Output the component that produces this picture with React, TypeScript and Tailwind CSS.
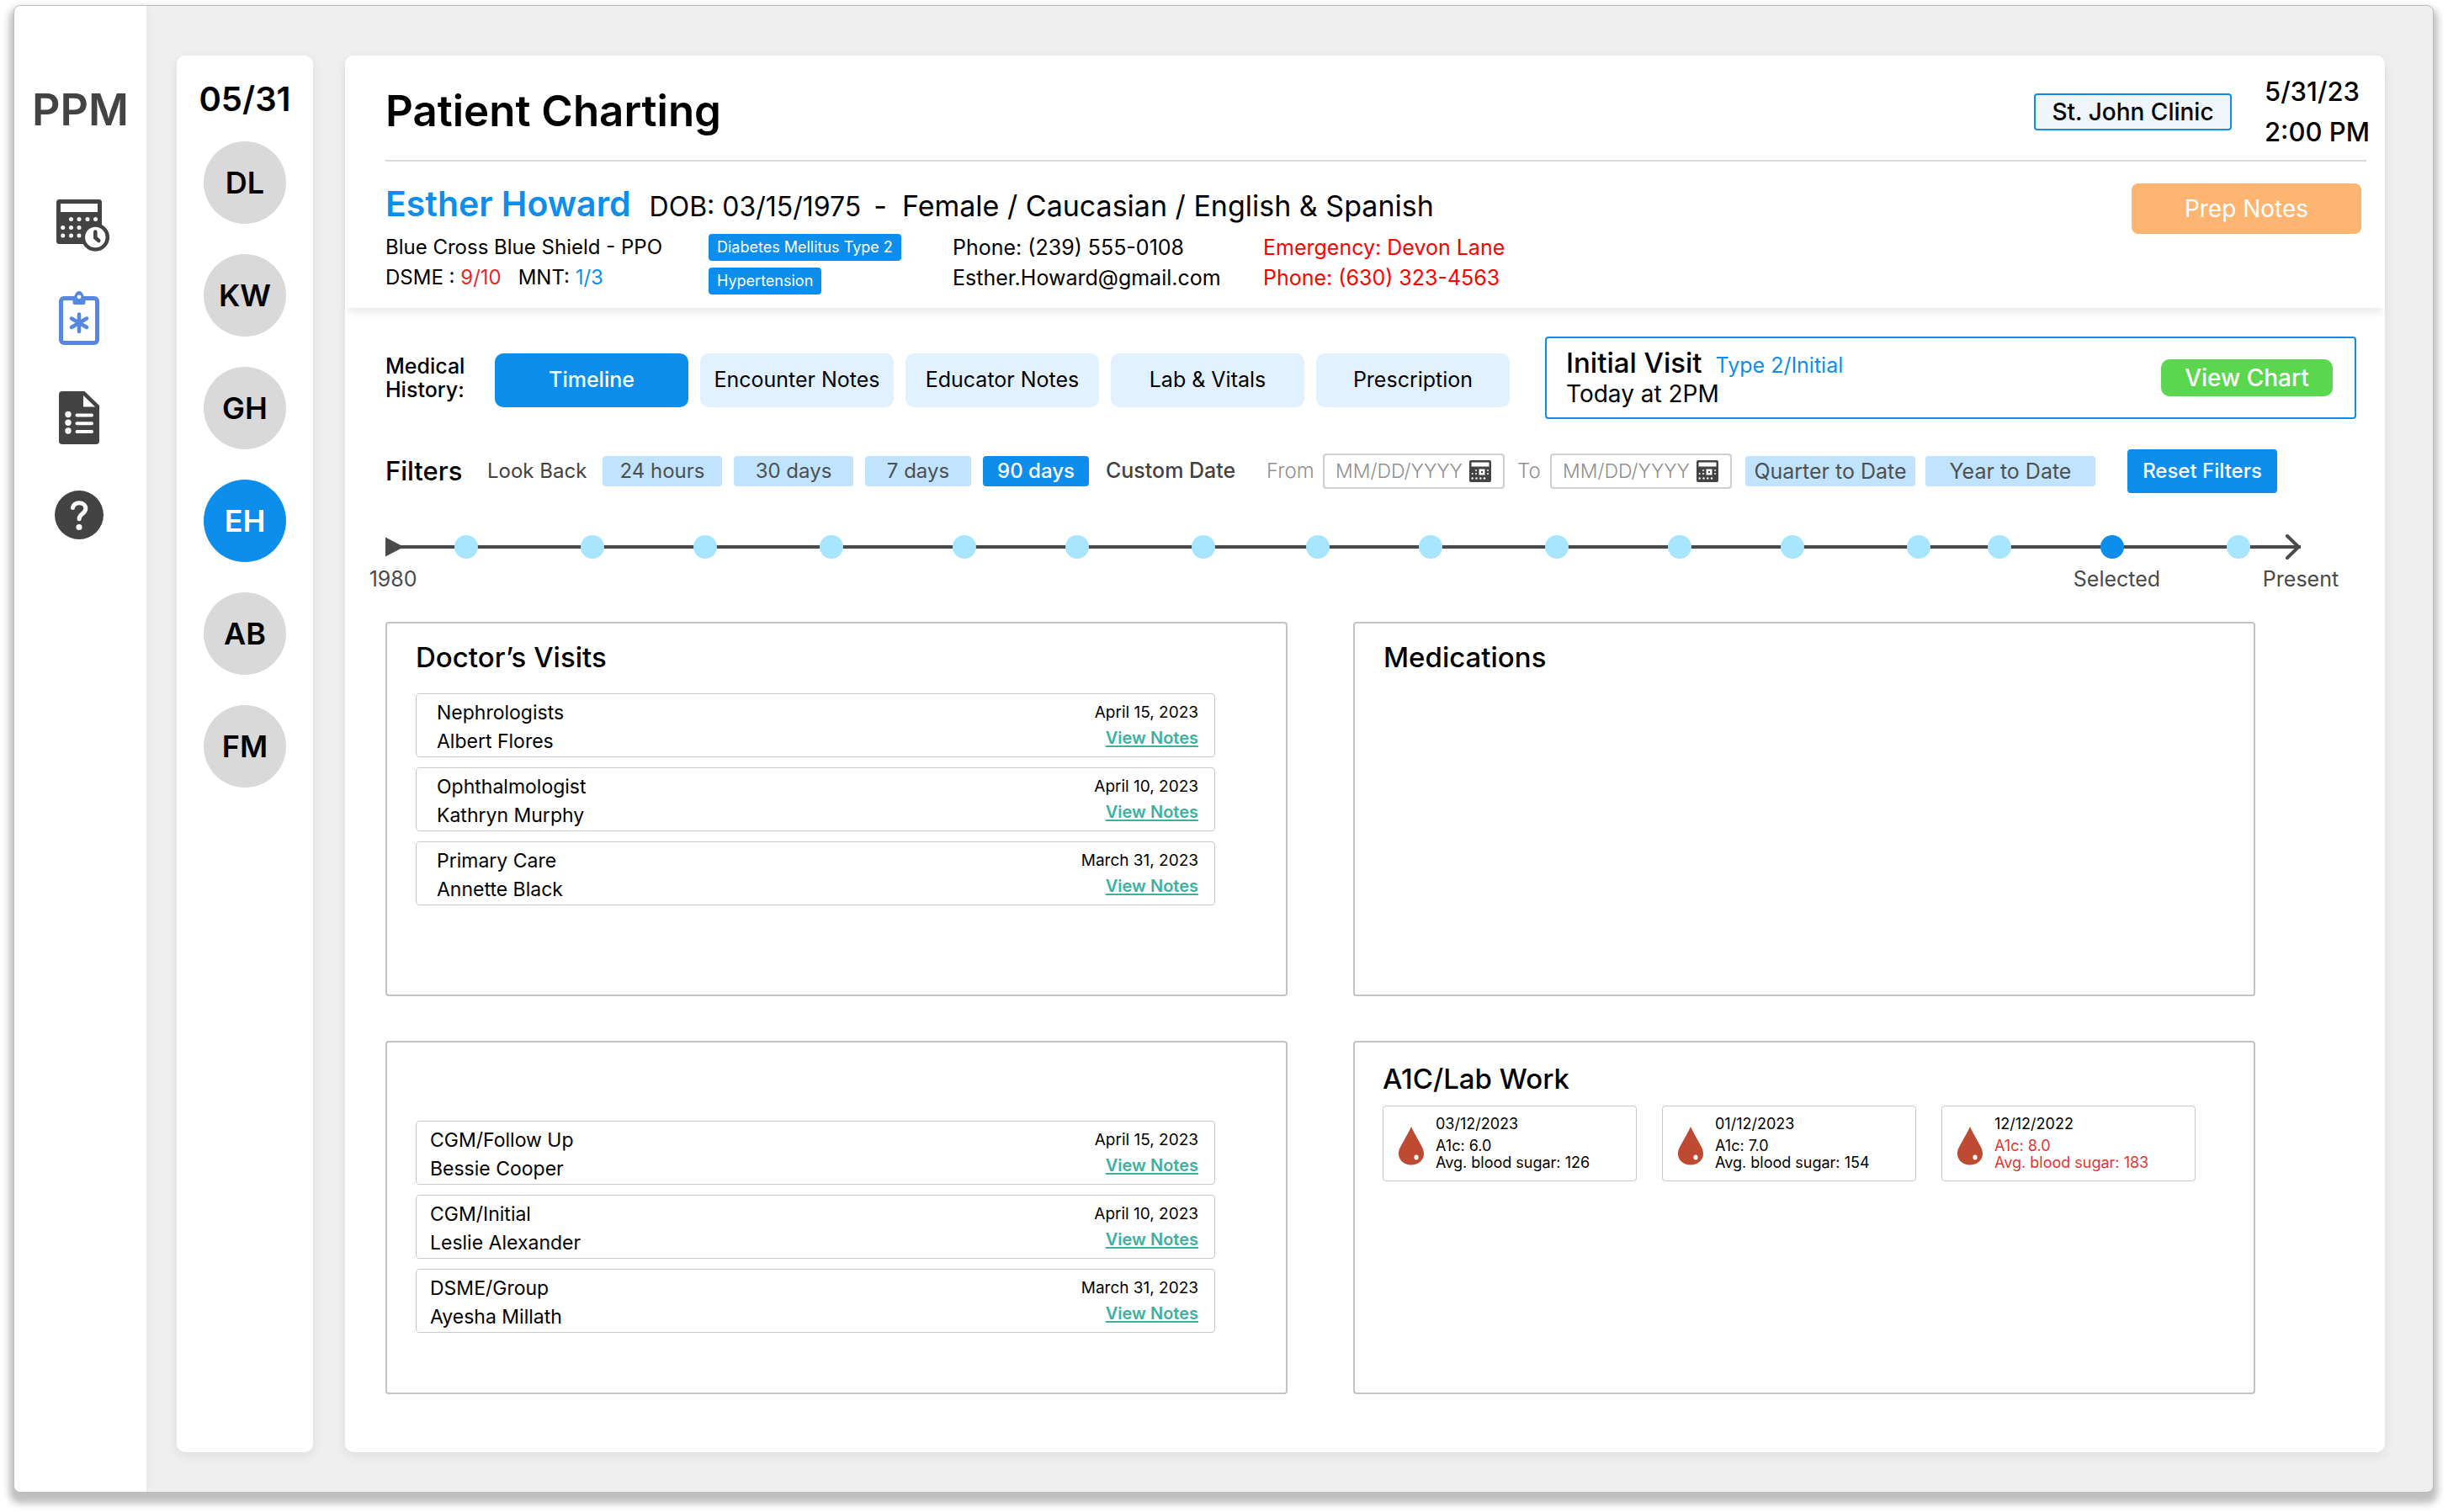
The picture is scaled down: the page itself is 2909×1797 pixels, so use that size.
/**
 * Patient charting screen.
 *
 * Icon rail on the left, the day's patient list next to it,
 * then the chart itself: header, history tabs, filters, timeline and four panels.
 */

import { clsx } from 'clsx'
import type { ReactNode } from 'react'

interface Visit {
  title: string
  provider: string
  date: string
}

const PATIENTS = ['DL', 'KW', 'GH', 'EH', 'AB', 'FM']
const ACTIVE_PATIENT = 'EH'

const TABS = ['Timeline', 'Encounter Notes', 'Educator Notes', 'Lab & Vitals', 'Prescription']

const LOOK_BACK = [
  { label: '24 hours', width: 'w-[142px]' },
  { label: '30 days', width: 'w-[142px]' },
  { label: '7 days', width: 'w-[126px]' },
  { label: '90 days', width: 'w-[126px]', active: true },
]

// Position of every event along the line, in percent
const EVENTS = [
  4.22, 10.81, 16.7, 23.29, 30.23, 36.12, 42.71, 48.68, 54.57, 61.16, 67.57, 73.46, 80.05, 84.27, 90.16, 96.75,
]
const SELECTED_EVENT = 90.16

const TIMELINE_LABELS = [
  { text: '1980', at: 0.4 },
  { text: 'Selected', at: 90.4 },
  { text: 'Present', at: 100 },
]

const DOCTOR_VISITS: Visit[] = [
  { title: 'Nephrologists', provider: 'Albert Flores', date: 'April 15, 2023' },
  { title: 'Ophthalmologist', provider: 'Kathryn Murphy', date: 'April 10, 2023' },
  { title: 'Primary Care', provider: 'Annette Black', date: 'March 31, 2023' },
]

const EDUCATOR_VISITS: Visit[] = [
  { title: 'CGM/Follow Up', provider: 'Bessie Cooper', date: 'April 15, 2023' },
  { title: 'CGM/Initial', provider: 'Leslie Alexander', date: 'April 10, 2023' },
  { title: 'DSME/Group', provider: 'Ayesha Millath', date: 'March 31, 2023' },
]

const LABS = [
  { date: '03/12/2023', a1c: '6.0', sugar: '126' },
  { date: '01/12/2023', a1c: '7.0', sugar: '154' },
  { date: '12/12/2022', a1c: '8.0', sugar: '183', high: true },
]

export default function App() {
  return (
    <div className="flex min-h-screen bg-white pt-[6px] pr-[17px] pb-[25px] pl-4 font-['Inter',sans-serif] text-black">
      <div className="flex flex-1 overflow-clip rounded-lg border border-[#bdbdbd] bg-[#efefef] shadow-[0_8px_8px_5px_rgba(0,0,0,0.25)]">
        <Sidebar />
        <PatientList />
        <main className="mt-[59px] mr-[57px] mb-[47px] ml-[38px] min-w-0 flex-1 rounded-[10px] bg-white shadow-[0_4px_14px_rgba(0,0,0,0.08)]">
          <PatientHeader />
          <div className="pt-[34px] pr-[34px] pb-[69px] pl-12">
            <MedicalHistory />
            <Filters />
            <Timeline />
            <div className="mt-[35px] mr-[120px] grid grid-cols-2 gap-x-[78px] gap-y-[53px]">
              <Panel className="min-h-[445px] pt-5 pr-[84px] pl-[34px]" title="Doctor’s Visits">
                <VisitList visits={DOCTOR_VISITS} className="mt-[23px]" rowClassName="pl-6" />
              </Panel>
              <Panel className="min-h-[445px] pt-5 pl-[34px]" title="Medications" />
              <Panel className="min-h-[420px] pt-[93px] pr-[84px] pl-[34px]">
                <VisitList visits={EDUCATOR_VISITS} rowClassName="pl-4" />
              </Panel>
              <Panel className="min-h-[420px] pt-[23px] pl-[33px]" title="A1C/Lab Work">
                <ul className="mt-3 flex gap-[30px]">
                  {LABS.map((lab) => (
                    <li
                      key={lab.date}
                      className="flex h-[90px] w-[302px] items-center gap-[14px] rounded border border-[#c9c9c9] pl-[18px] text-[18px] leading-5"
                    >
                      <DropIcon />
                      <div>
                        <div className="mb-1.5">{lab.date}</div>
                        <div className={clsx(lab.high && 'text-[#df3535]')}>
                          <div>A1c: {lab.a1c}</div>
                          <div>Avg. blood sugar: {lab.sugar}</div>
                        </div>
                      </div>
                    </li>
                  ))}
                </ul>
              </Panel>
            </div>
          </div>
        </main>
      </div>
    </div>
  )
}

function Sidebar() {
  return (
    <aside className="flex w-[157px] flex-shrink-0 flex-col items-center rounded-l-[7px] bg-white pt-[92px] shadow-[0_0_10px_rgba(0,0,0,0.06)]">
      <div className="text-[52px] leading-[64px] font-semibold text-[#434343]">PPM</div>
      <nav className="mt-[74px] flex flex-col items-center gap-[55px] pr-1">
        <a href="#schedule" aria-label="Schedule"><ScheduleIcon /></a>
        <a href="#charting" aria-label="Charting"><ClipboardIcon /></a>
        <a href="#reports" aria-label="Reports"><ReportIcon /></a>
        <a href="#help" aria-label="Help"><HelpIcon /></a>
      </nav>
    </aside>
  )
}

function PatientList() {
  return (
    <section className="mt-[59px] mb-[47px] ml-9 flex w-[162px] flex-shrink-0 flex-col items-center rounded-[10px] bg-white pt-7 shadow-[0_4px_14px_rgba(0,0,0,0.08)]">
      <h2 className="text-[40px] leading-[48px] font-semibold">05/31</h2>
      <div className="mt-[26px] flex flex-col gap-9">
        {PATIENTS.map((initials) => (
          <button
            key={initials}
            type="button"
            className={clsx(
              'h-[98px] w-[98px] rounded-full text-[36px] font-semibold',
              initials === ACTIVE_PATIENT ? 'bg-[#0d8eec] text-white' : 'bg-[#d9d9d9]',
            )}
          >
            {initials}
          </button>
        ))}
      </div>
    </section>
  )
}

function PatientHeader() {
  return (
    <header className="rounded-t-[10px] pr-[22px] pb-4 pl-12 shadow-[0_9px_9px_-3px_rgba(0,0,0,0.08)]">
      <div className="flex h-[126px] items-center border-b-2 border-[#dadada] pt-[9px]">
        <h1 className="flex-1 text-[51px] font-semibold">Patient Charting</h1>
        <button
          type="button"
          className="h-11 w-[235px] rounded border-2 border-[#0d8eec] bg-[#eff6fd] text-[28px] leading-10 font-medium"
        >
          St. John Clinic
        </button>
        <div className="ml-[39px] w-[121px] text-[31px] leading-[48px] font-medium whitespace-nowrap">
          <div>5/31/23</div>
          <div>2:00 PM</div>
        </div>
      </div>

      <div className="flex items-start justify-between pt-[26px]">
        <div>
          <div className="flex items-baseline text-[34px] leading-[48px]">
            <h2 className="mr-[22px] text-[41px] font-semibold text-[#0d8eec]">Esther Howard</h2>
            <span className="text-[32px]">DOB: 03/15/1975</span>
            <span className="mr-[18px] ml-[15px]">-</span>
            <span>Female / Caucasian / English &amp; Spanish</span>
          </div>

          <div className="mt-1.5 grid grid-cols-[384px_290px_369px_auto] text-[25px] leading-9">
            <div className="text-[24px]">
              <div>Blue Cross Blue Shield - PPO</div>
              <div className="flex gap-5">
                <span>DSME : <span className="text-[#e02b2b]">9/10</span></span>
                <span>MNT: <span className="text-[#0d8eec]">1/3</span></span>
              </div>
            </div>
            <div className="flex flex-col items-start gap-2 pt-0.5">
              <Diagnosis>Diabetes Mellitus Type 2</Diagnosis>
              <Diagnosis>Hypertension</Diagnosis>
            </div>
            <div>
              <div>Phone: (239) 555-0108</div>
              <div>Esther.Howard@gmail.com</div>
            </div>
            <div className="text-[#ff0000]">
              <div>Emergency: Devon Lane</div>
              <div>Phone: (630) 323-4563</div>
            </div>
          </div>
        </div>

        <button type="button" className="mr-1.5 h-[60px] w-[273px] rounded-lg bg-[#feb571] text-[28px] text-white">
          Prep Notes
        </button>
      </div>
    </header>
  )
}

function Diagnosis({ children }: { children: ReactNode }) {
  return <span className="rounded bg-[#0d8eec] px-[10px] text-[18px] leading-8 text-white">{children}</span>
}

function MedicalHistory() {
  return (
    <div className="flex items-center">
      <div className="w-[130px] text-[25px] leading-7 font-medium">
        Medical
        <br />
        History:
      </div>
      <div className="flex gap-[14px] pt-1.5">
        {TABS.map((tab, i) => (
          <button
            key={tab}
            type="button"
            className={clsx(
              'h-16 w-[230px] rounded-[10px] text-[25px]',
              i === 0 ? 'bg-[#0d8eec] font-medium text-white' : 'bg-[#e1f1ff]',
            )}
          >
            {tab}
          </button>
        ))}
      </div>
      <div className="ml-[42px] flex h-[98px] flex-1 items-center justify-between rounded-sm border-2 border-[#0d8eec] pr-[26px] pl-[23px]">
        <div className="leading-[34px]">
          <div className="flex items-baseline gap-4">
            <span className="text-[33px] font-medium">Initial Visit</span>
            <span className="text-[25px] text-[#0d8eec]">Type 2/Initial</span>
          </div>
          <div className="text-[28px]">Today at 2PM</div>
        </div>
        <button type="button" className="h-11 w-[204px] rounded-[10px] bg-[#5ad74f] text-[28px] font-medium text-white">
          View Chart
        </button>
      </div>
    </div>
  )
}

function Filters() {
  return (
    <div className="mt-9 flex items-center text-[24px] text-[#434343]">
      <h3 className="w-[121px] text-[31px] font-medium text-black">Filters</h3>
      <div className="w-[137px]">Look Back</div>
      <div className="flex gap-[14px]">
        {LOOK_BACK.map((range) => (
          <button
            key={range.label}
            type="button"
            className={clsx(
              'h-9 rounded',
              range.width,
              range.active ? 'bg-[#0d8eec] font-medium text-white' : 'bg-[#c0e4ff] text-[#4f4f4f]',
            )}
          >
            {range.label}
          </button>
        ))}
      </div>
      <div className="ml-5 w-[191px] text-[25px] font-medium">Custom Date</div>
      <DateField id="date-from" label="From" labelClassName="w-[67px]" />
      <DateField id="date-to" label="To" labelClassName="ml-[15px] w-[39px]" />
      <div className="ml-4 flex gap-3 text-[25px] text-[#4f4f4f]">
        <button type="button" className="h-9 w-[202px] rounded bg-[#c0e4ff]">Quarter to Date</button>
        <button type="button" className="h-9 w-[202px] rounded bg-[#c0e4ff]">Year to Date</button>
      </div>
      <button type="button" className="ml-[38px] h-[52px] w-[178px] rounded bg-[#0d8eec] font-medium text-white">
        Reset Filters
      </button>
    </div>
  )
}

function DateField({ id, label, labelClassName }: { id: string; label: string; labelClassName: string }) {
  return (
    <>
      <label htmlFor={id} className={clsx('font-light text-[#8f8f8f]', labelClassName)}>
        {label}
      </label>
      <div className="flex h-[42px] w-[216px] items-center rounded border-2 border-[#cfcfcf] pr-[14px] pl-[13px]">
        <input
          id={id}
          type="text"
          placeholder="MM/DD/YYYY"
          className="min-w-0 flex-1 text-[23px] font-light placeholder:text-[#8f8f8f] focus:outline-none"
        />
        <CalendarIcon />
      </div>
    </>
  )
}

function Timeline() {
  return (
    <div className="mt-[50px] mr-[66px]">
      <div className="relative flex h-7 items-center">
        <svg width="22" height="24" viewBox="0 0 22 24" fill="#4a4a4a" aria-hidden="true">
          <path d="M0 0.5 22 12 0 23.5Z" />
        </svg>
        <div className="-ml-1 h-1 flex-1 bg-[#4a4a4a]" />
        <svg className="-ml-5" width="20" height="32" viewBox="0 0 20 32" fill="none" aria-hidden="true">
          <path d="M4 3 17.5 16 4 29" stroke="#4a4a4a" strokeWidth="4" strokeLinecap="round" />
        </svg>
        {EVENTS.map((at) => (
          <button
            key={at}
            type="button"
            aria-label={`Event at ${at}%`}
            className={clsx(
              'absolute top-0 h-7 w-7 -translate-x-1/2 rounded-full',
              at === SELECTED_EVENT ? 'bg-[#0d8eec]' : 'bg-[#a8e5ff]',
            )}
            style={{ left: `${at}%` }}
          />
        ))}
      </div>
      <div className="relative mt-2 h-8 text-[25px] leading-8 text-[#4a4a4a]">
        {TIMELINE_LABELS.map((label) => (
          <span key={label.text} className="absolute -translate-x-1/2" style={{ left: `${label.at}%` }}>
            {label.text}
          </span>
        ))}
      </div>
    </div>
  )
}

function Panel({ title, className, children }: { title?: string; className: string; children?: ReactNode }) {
  return (
    <section className={clsx('rounded border-2 border-[#c6c2c3]', className)}>
      {title && <h3 className="text-[33px] leading-10 font-medium">{title}</h3>}
      {children}
    </section>
  )
}

function VisitList({ visits, className, rowClassName }: { visits: Visit[]; className?: string; rowClassName: string }) {
  return (
    <ul className={clsx('flex flex-col gap-3', className)}>
      {visits.map((visit) => (
        <li
          key={visit.title}
          className={clsx('flex h-[76px] items-start justify-between rounded border border-[#c9c9c9] pr-[19px]', rowClassName)}
        >
          <div className="pt-[5px] text-[23px] leading-[34px]">
            <div>{visit.title}</div>
            <div>{visit.provider}</div>
          </div>
          <div className="pt-[7px] text-right text-[19px] leading-[30px]">
            <div>{visit.date}</div>
            <a href="#notes" className="block text-[20px] font-semibold text-[#3eb0a1] underline underline-offset-2">
              View Notes
            </a>
          </div>
        </li>
      ))}
    </ul>
  )
}

/* Icons */

function ScheduleIcon() {
  return (
    <svg className="overflow-visible" width="54" height="53" viewBox="0 0 54 53" aria-hidden="true">
      <rect width="54" height="53" rx="3.5" fill="#434343" />
      <rect x="5" y="5" width="44" height="10" fill="#fff" />
      <g fill="#fff">
        <circle cx="17.5" cy="23.6" r="2.5" />
        <circle cx="27" cy="23.6" r="2.5" />
        <circle cx="37" cy="23.6" r="2.5" />
        <circle cx="46.5" cy="23.6" r="2.5" />
        <circle cx="7.7" cy="33.4" r="2.5" />
        <circle cx="17.5" cy="33.4" r="2.5" />
        <circle cx="27" cy="33.4" r="2.5" />
        <circle cx="7.7" cy="43" r="2.5" />
        <circle cx="17.5" cy="43" r="2.5" />
        <circle cx="27" cy="43" r="2.5" />
      </g>
      <circle cx="46.3" cy="45" r="14.5" fill="#fff" stroke="#434343" strokeWidth="4.5" />
      <path d="M46.3 38.5v7l4 3.5" fill="none" stroke="#434343" strokeWidth="4.5" strokeLinecap="round" />
    </svg>
  )
}

function ClipboardIcon() {
  return (
    <svg width="48" height="65" viewBox="0 0 48 65" fill="none" stroke="#5688e0" aria-hidden="true">
      <rect x="2.5" y="9.5" width="43" height="53" rx="3.5" strokeWidth="5" />
      <path d="M18.5 15V9.5c2 0 2-6.500 5.500-6.500s3.500 6.500 5.500 6.500V15Z" fill="#5688e0" strokeWidth="4" strokeLinejoin="round" />
      <circle cx="24" cy="7.8" r="2.4" fill="#fff" stroke="none" />
      <path d="M24 28.5V49M15 33.5 33 44M33 33.5 15 44" strokeWidth="4.5" strokeLinecap="round" />
    </svg>
  )
}

function ReportIcon() {
  return (
    <svg width="48" height="63" viewBox="0 0 48 63" aria-hidden="true">
      <path d="M4 0H30.5L48 17V59a4 4 0 0 1-4 4H4a4 4 0 0 1-4-4V4a4 4 0 0 1 4-4Z" fill="#434343" />
      <path d="M29 5v13.5h14Z" fill="#fff" />
      <g fill="#fff">
        <circle cx="11" cy="27.5" r="3.7" />
        <circle cx="11" cy="37.3" r="3.7" />
        <circle cx="11" cy="47" r="3.7" />
      </g>
      <path d="M21.5 28.5H39M21.5 38.3H39M21.5 48H39" stroke="#fff" strokeWidth="4" strokeLinecap="round" />
    </svg>
  )
}

function HelpIcon() {
  return (
    <svg width="58" height="58" viewBox="0 0 58 58" fill="none" aria-hidden="true">
      <circle cx="29" cy="29" r="29" fill="#434343" />
      <path
        d="M21.5 20.5c.8-3.6 3.7-5.8 7.5-5.8 4.6 0 7.8 2.7 7.8 6.6 0 3-1.6 4.7-4 6.4-2.6 1.8-3.7 3-3.7 6"
        stroke="#fff"
        strokeWidth="5"
        strokeLinecap="round"
      />
      <circle cx="29" cy="43.5" r="3.6" fill="#fff" />
    </svg>
  )
}

function CalendarIcon() {
  return (
    <svg className="flex-shrink-0" width="26" height="26" viewBox="0 0 26 26" aria-hidden="true">
      <rect width="26" height="26" rx="2" fill="#434343" />
      <rect x="2.5" y="2.5" width="21" height="5" fill="#fff" />
      <rect x="11.5" y="10.5" width="7" height="7" fill="#fff" />
      <rect x="14" y="13" width="2" height="2" fill="#434343" />
      <g fill="#fff">
        <circle cx="8" cy="12" r="1" />
        <circle cx="22" cy="12" r="1" />
        <circle cx="3.7" cy="16" r="1" />
        <circle cx="8" cy="16" r="1" />
        <circle cx="22" cy="16" r="1" />
        <circle cx="3.7" cy="21.5" r="1.2" />
        <circle cx="8.5" cy="21.5" r="1.2" />
        <circle cx="13.3" cy="21.5" r="1.2" />
        <circle cx="18" cy="21.5" r="1.2" />
      </g>
    </svg>
  )
}

function DropIcon() {
  return (
    <svg width="30" height="52" viewBox="0 0 30 52" aria-hidden="true">
      <path d="M15 6C17 11 20.5 16.5 24.500 24 27.500 29.500 30 33 30 38c0 8-6.500 13.500-15 13.500S0 46 0 38C0 33 2.500 29.500 5.500 24 9.500 16.500 13 11 15 6Z" fill="#be4a31" />
      <ellipse cx="21" cy="42.500" rx="2.600" ry="3" fill="#fff" />
    </svg>
  )
}
